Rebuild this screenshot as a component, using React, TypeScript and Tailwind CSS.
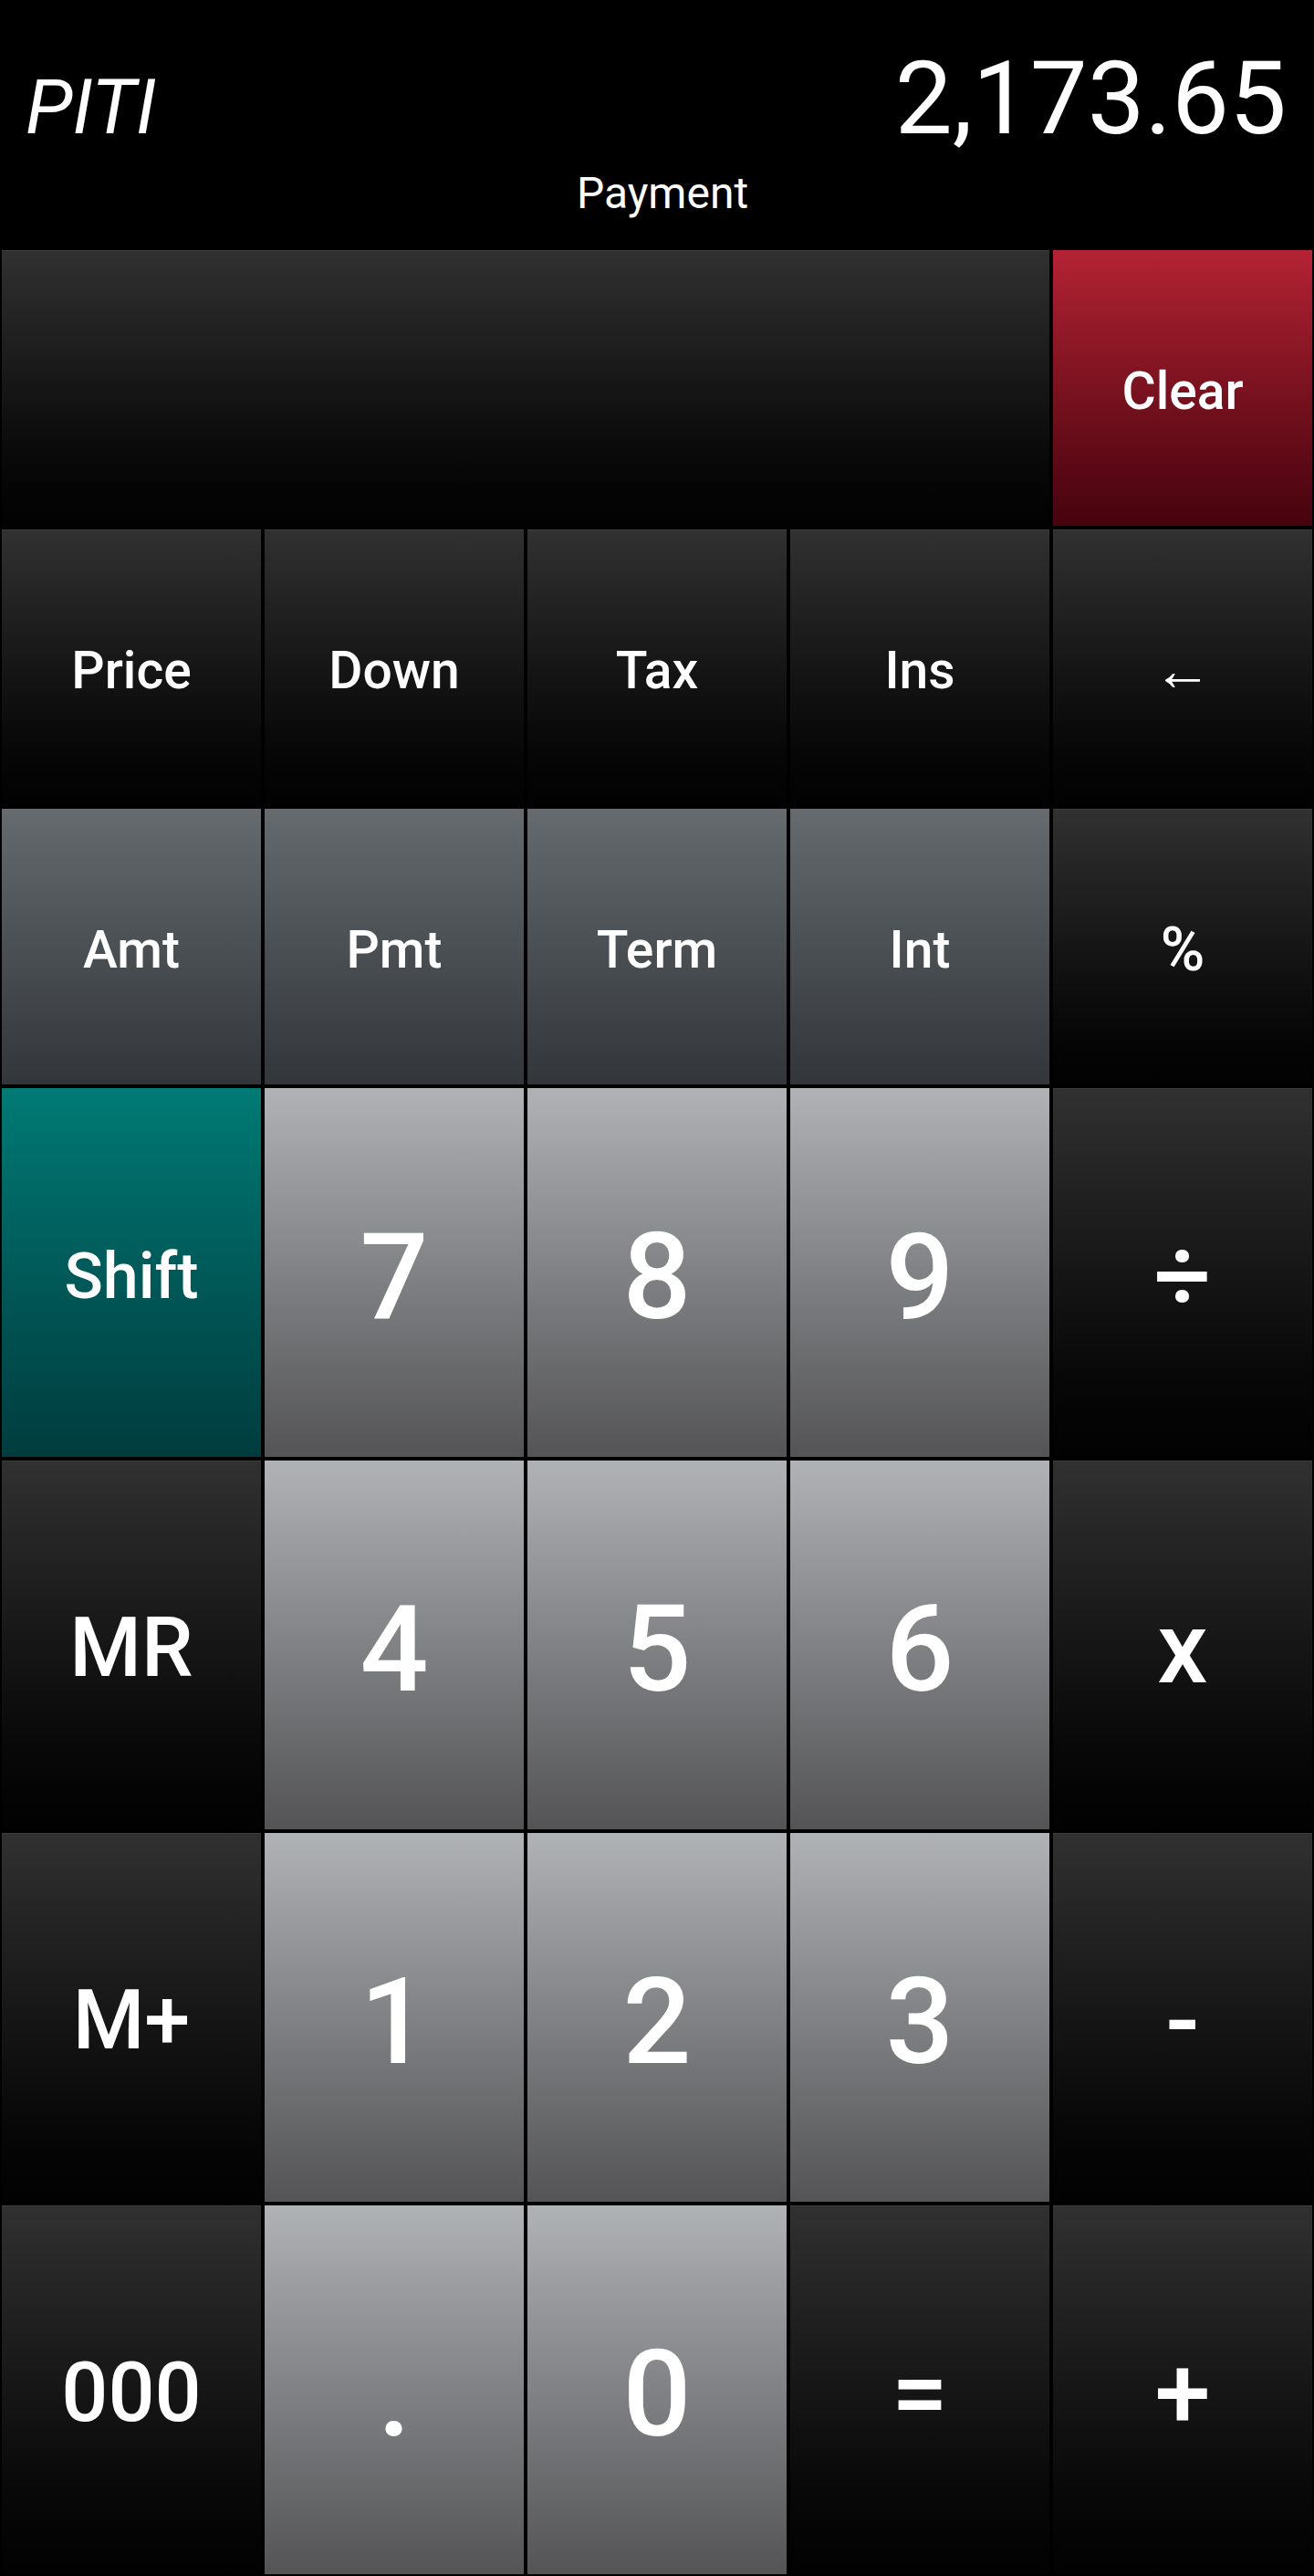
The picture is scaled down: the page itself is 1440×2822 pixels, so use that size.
import React from 'react';

type Tone = 'dark' | 'fn' | 'num' | 'shift' | 'clear';

interface KeyDef {
  label: string;
  tone: Tone;
  size: string;
  span?: string;
}

const toneClass: Record<Tone, string> = {
  dark: 'bg-linear-to-b from-[#313131] to-[#020202] shadow-[inset_0_1px_0_rgba(255,255,255,0.06)]',
  fn: 'bg-linear-to-b from-[#656b6f] to-[#32363a]',
  num: 'bg-linear-to-b from-[#b0b3b6] to-[#545456]',
  shift: 'bg-linear-to-b from-[#007a75] to-[#003c3e]',
  clear: 'bg-linear-to-b from-[#b42333] to-[#46040e]',
};

const label = 'text-[57px] font-medium pt-[6px]';
const digit = 'text-[132px] font-medium pt-[10px]';
const big = 'text-[90px] font-medium pt-[8px]';
const op = 'text-[110px] font-medium pt-[8px]';

const keys: KeyDef[] = [
  { label: '', tone: 'dark', size: label, span: 'col-span-4' },
  { label: 'Clear', tone: 'clear', size: label },

  { label: 'Price', tone: 'dark', size: label },
  { label: 'Down', tone: 'dark', size: label },
  { label: 'Tax', tone: 'dark', size: label },
  { label: 'Ins', tone: 'dark', size: label },
  { label: '←', tone: 'dark', size: 'text-[64px] font-normal pt-[8px]' },

  { label: 'Amt', tone: 'fn', size: label },
  { label: 'Pmt', tone: 'fn', size: label },
  { label: 'Term', tone: 'fn', size: label },
  { label: 'Int', tone: 'fn', size: label },
  { label: '%', tone: 'dark', size: 'text-[66px] font-medium pt-[8px]' },

  { label: 'Shift', tone: 'shift', size: 'text-[70px] font-medium pt-[8px]' },
  { label: '7', tone: 'num', size: digit },
  { label: '8', tone: 'num', size: digit },
  { label: '9', tone: 'num', size: digit },
  { label: '÷', tone: 'dark', size: op },

  { label: 'MR', tone: 'dark', size: big },
  { label: '4', tone: 'num', size: digit },
  { label: '5', tone: 'num', size: digit },
  { label: '6', tone: 'num', size: digit },
  { label: 'x', tone: 'dark', size: op },

  { label: 'M+', tone: 'dark', size: big },
  { label: '1', tone: 'num', size: digit },
  { label: '2', tone: 'num', size: digit },
  { label: '3', tone: 'num', size: digit },
  { label: '-', tone: 'dark', size: op },

  { label: '000', tone: 'dark', size: big },
  { label: '.', tone: 'num', size: digit },
  { label: '0', tone: 'num', size: digit },
  { label: '=', tone: 'dark', size: op },
  { label: '+', tone: 'dark', size: op },
];

const Key: React.FC<{ k: KeyDef }> = ({ k }) => (
  <button
    className={`m-[2px] flex items-center justify-center leading-none text-white ${toneClass[k.tone]} ${k.size} ${k.span ?? ''}`}
  >
    {k.label}
  </button>
);

export default function App() {
  return (
    <div className="w-[1440px] h-[2822px] bg-black text-white font-['Roboto','Liberation_Sans',sans-serif] overflow-hidden">
      <header className="h-[272px] flex flex-col">
        <div className="flex items-baseline justify-between pt-[52px] pl-[28px] pr-[30px]">
          <span className="text-[84px] italic font-normal leading-none">PITI</span>
          <span className="text-[112px] font-normal leading-none">2,173.65</span>
        </div>
        <div className="mt-[24px] text-center text-[48px] leading-none pl-[12px]">Payment</div>
      </header>
      <div className="grid grid-cols-5 grid-rows-[306px_306px_306px_408px_408px_408px_408px]">
        {keys.map((k, i) => (
          <Key key={i} k={k} />
        ))}
      </div>
    </div>
  );
}
